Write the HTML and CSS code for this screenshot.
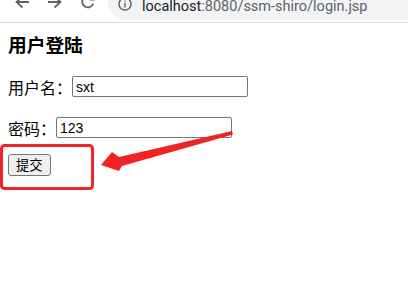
FILE: index.html
```html
<!DOCTYPE html>
<html lang="zh-CN">
<head>
<meta charset="utf-8">
<title>login</title>
<link rel="stylesheet" href="styles.css">
</head>
<body>
<div class="chrome">
  <div class="toolbar">
    <div class="nav">
      <svg class="nav-icon" width="16" height="16" viewBox="0 0 16 16"><path d="M15 8H3.5M8.5 2.5L2.5 8l6 5.5" fill="none" stroke="#5f6368" stroke-width="1.8"/></svg>
      <svg class="nav-icon" width="16" height="16" viewBox="0 0 16 16"><path d="M1 8h11.5M7.5 2.5l6 5.5-6 5.5" fill="none" stroke="#5f6368" stroke-width="1.8"/></svg>
      <svg class="nav-icon" width="16" height="16" viewBox="0 0 16 16"><path d="M13.2 9.5A5.6 5.6 0 1 1 11.9 3.9" fill="none" stroke="#5f6368" stroke-width="1.8"/><path d="M14.5 1.5v5h-5z" fill="#5f6368"/></svg>
    </div>
    <div class="omnibox">
      <svg class="info" width="14" height="14" viewBox="0 0 14 14"><circle cx="7" cy="7" r="6" fill="none" stroke="#5f6368" stroke-width="1.4"/><path d="M7 6v4.5M7 3.4v1.4" stroke="#5f6368" stroke-width="1.4"/></svg>
      <span class="url"><span class="host">localhost</span><span class="path">:8080/ssm-shiro/login.jsp</span></span>
    </div>
  </div>
</div>
<main class="page">
  <h3 class="title">用户登陆</h3>
  <form class="login">
    <div class="row row-user"><label class="label">用户名：</label><input class="field" type="text" value="sxt"></div>
    <div class="row row-pass"><label class="label">密码：</label><input class="field" type="text" value="123"></div>
    <div class="row row-submit"><button class="submit" type="button">提交</button></div>
  </form>
</main>
<svg class="annotation" width="408" height="287" viewBox="0 0 408 287">
  <rect x="1.5" y="145.5" width="91" height="43" rx="3" fill="none" stroke="#f02424" stroke-width="3"/>
  <polygon points="232,131 233,134.5 122,166 119,171 101,165 112,152 119,157" fill="#f02424"/>
</svg>
</body>
</html>
```

FILE: styles.css
```css
html, body {
  margin: 0;
  padding: 0;
  background: #fff;
}
body {
  width: 408px;
  height: 287px;
  overflow: hidden;
  position: relative;
  font-family: "Noto Sans CJK SC", "Liberation Sans", sans-serif;
  color: #000;
}
.chrome {
  height: 22px;
  border-bottom: 1px solid #dadce0;
  overflow: hidden;
}
.toolbar {
  display: flex;
  align-items: center;
  height: 36px;
  margin-top: -16px;
}
.nav {
  display: flex;
  align-items: center;
  gap: 17px;
  padding-left: 14px;
  width: 94px;
}
.nav-icon {
  flex: none;
}
.omnibox {
  flex: 1;
  height: 36px;
  background: #f1f3f4;
  border-radius: 18px 0 0 18px;
  display: flex;
  align-items: center;
  padding-left: 10px;
}
.info {
  flex: none;
  margin-right: 10px;
  position: relative;
  top: 2px;
}
.url {
  font-family: Roboto, "Liberation Sans", sans-serif;
  font-size: 14.5px;
  position: relative;
  top: 4px;
  white-space: nowrap;
}
.host { color: #202124; }
.path { color: #5f6368; }

.page {
  padding: 0 8px;
}
.title {
  margin: 10px 0 0;
  font-size: 18.72px;
  line-height: 22px;
  font-weight: bold;
}
.login {
  margin: 0;
}
.row {
  display: flex;
  align-items: center;
  height: 21px;
}
.row-user { margin-top: 21px; }
.row-pass { margin-top: 20px; }
.row-submit { margin-top: 16px; height: 22px; }
.label {
  font-size: 16px;
  line-height: 21px;
  position: relative;
  top: 1px;
}
.field {
  box-sizing: border-box;
  width: 176px;
  height: 21px;
  margin: 0;
  padding: 1px 3px;
  border: 1px solid #767676;
  border-radius: 2px;
  font-family: "Liberation Sans", Arial, sans-serif;
  font-size: 14px;
  color: #000;
  background: #fff;
}
.submit {
  box-sizing: border-box;
  height: 22px;
  margin: 0;
  padding: 0 7px;
  border: 1px solid #767676;
  border-radius: 3px;
  background: #efefef;
  font-family: "Noto Sans CJK SC", sans-serif;
  font-size: 13.33px;
  line-height: 20px;
  color: #000;
}
.annotation {
  position: absolute;
  left: 0;
  top: 0;
  pointer-events: none;
}
```
